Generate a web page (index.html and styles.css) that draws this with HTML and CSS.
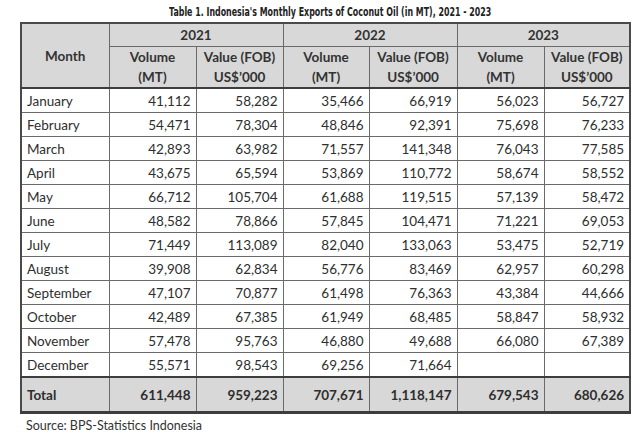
FILE: index.html
```html
<!DOCTYPE html>
<html>
<head>
<meta charset="utf-8">
<link rel="stylesheet" href="styles.css">
</head>
<body>
<div class="page">
  <div class="title"><span class="title-text">Table 1. Indonesia's Monthly Exports of Coconut Oil (in MT), 2021 - 2023</span></div>
  <table class="data">
    <colgroup>
      <col class="c-month"><col class="c-a"><col class="c-a"><col class="c-b"><col class="c-c"><col class="c-a"><col class="c-b">
    </colgroup>
    <thead>
      <tr class="yr">
        <th rowspan="2" class="month-h">Month</th>
        <th colspan="2">2021</th>
        <th colspan="2">2022</th>
        <th colspan="2">2023</th>
      </tr>
      <tr class="sub">
        <th>Volume<br>(MT)</th><th>Value (FOB)<br>US$’000</th>
        <th>Volume<br>(MT)</th><th>Value (FOB)<br>US$’000</th>
        <th>Volume<br>(MT)</th><th>Value (FOB)<br>US$’000</th>
      </tr>
    </thead>
    <tbody>
      <tr><td>January</td><td>41,112</td><td>58,282</td><td>35,466</td><td>66,919</td><td>56,023</td><td>56,727</td></tr>
      <tr><td>February</td><td>54,471</td><td>78,304</td><td>48,846</td><td>92,391</td><td>75,698</td><td>76,233</td></tr>
      <tr><td>March</td><td>42,893</td><td>63,982</td><td>71,557</td><td>141,348</td><td>76,043</td><td>77,585</td></tr>
      <tr><td>April</td><td>43,675</td><td>65,594</td><td>53,869</td><td>110,772</td><td>58,674</td><td>58,552</td></tr>
      <tr><td>May</td><td>66,712</td><td>105,704</td><td>61,688</td><td>119,515</td><td>57,139</td><td>58,472</td></tr>
      <tr><td>June</td><td>48,582</td><td>78,866</td><td>57,845</td><td>104,471</td><td>71,221</td><td>69,053</td></tr>
      <tr><td>July</td><td>71,449</td><td>113,089</td><td>82,040</td><td>133,063</td><td>53,475</td><td>52,719</td></tr>
      <tr><td>August</td><td>39,908</td><td>62,834</td><td>56,776</td><td>83,469</td><td>62,957</td><td>60,298</td></tr>
      <tr><td>September</td><td>47,107</td><td>70,877</td><td>61,498</td><td>76,363</td><td>43,384</td><td>44,666</td></tr>
      <tr><td>October</td><td>42,489</td><td>67,385</td><td>61,949</td><td>68,485</td><td>58,847</td><td>58,932</td></tr>
      <tr><td>November</td><td>57,478</td><td>95,763</td><td>46,880</td><td>49,688</td><td>66,080</td><td>67,389</td></tr>
      <tr><td>December</td><td>55,571</td><td>98,543</td><td>69,256</td><td>71,664</td><td></td><td></td></tr>
    </tbody>
    <tfoot>
      <tr><td>Total</td><td>611,448</td><td>959,223</td><td>707,671</td><td>1,118,147</td><td>679,543</td><td>680,626</td></tr>
    </tfoot>
  </table>
  <div class="source">Source: BPS-Statistics Indonesia</div>
</div>
</body>
</html>
```
FILE: styles.css
```css
html, body {
  margin: 0;
  padding: 0;
  background: #ffffff;
}
.page {
  padding: 4px 11px 0 20px;
  font-family: Lato, "Open Sans", sans-serif;
  color: #2e2e2e;
}
.title {
  font-family: "DejaVu Sans Condensed", "Liberation Sans", sans-serif;
  font-weight: bold;
  font-size: 11.8px;
  line-height: 16px;
  height: 18px;
  text-align: center;
  padding-left: 12px;
  color: #222;
}
.title-text {
  display: inline-block;
  transform: scaleX(0.745);
  transform-origin: center;
  white-space: nowrap;
}
.data {
  width: 609px;
  border-collapse: collapse;
  table-layout: fixed;
  border: 2px solid #4a4a4a;
  font-size: 13.5px;
}
.c-month { width: 88px; }
.c-a { width: 87px; }
.c-b { width: 86px; }
.c-c { width: 88px; }
.data th, .data td {
  border: 1px solid #6a6a6a;
  padding: 0 5px;
}
.data th {
  background: #d8d8d8;
  font-weight: bold;
  text-align: center;
  color: #333;
}
.yr th { height: 22px; }
.sub th { height: 40px; line-height: 20px; }
.data thead tr.sub th { border-bottom: 2px solid #3d3d3d; }
.data thead .month-h { border-bottom: 2px solid #3d3d3d; }
.data tbody td {
  height: 23px;
  text-align: right;
}
.data tbody td:first-child { text-align: left; }
.data tfoot td {
  height: 33px;
  background: #d8d8d8;
  font-weight: bold;
  text-align: right;
  border-top: 2px solid #3d3d3d;
  border-bottom: 3px solid #3d3d3d;
}
.data tfoot td:first-child { text-align: left; }
.source {
  margin-top: 4px;
  padding-left: 6px;
  font-size: 12.5px;
  line-height: 16px;
  color: #333;
}
```
